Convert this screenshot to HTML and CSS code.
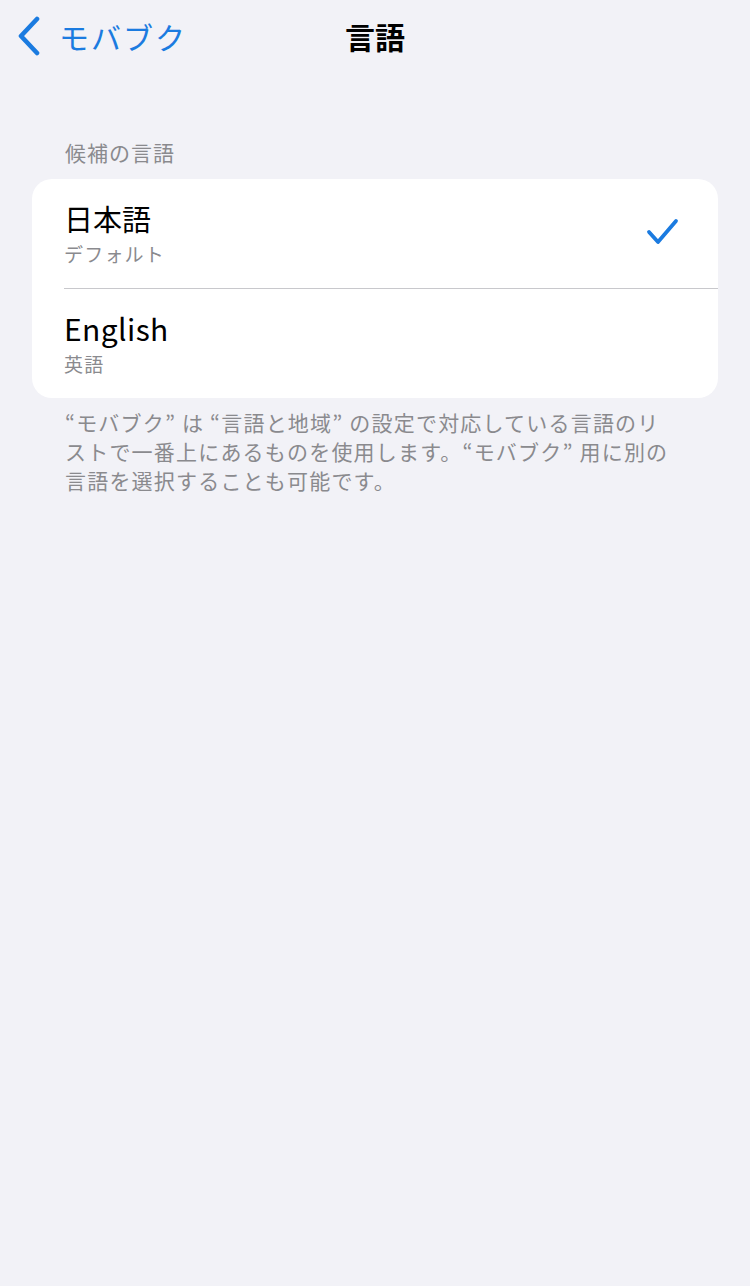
FILE: index.html
```html
<!DOCTYPE html>
<html>
<head>
    <title>言語</title>
    <link rel="stylesheet" href="styles.css">
</head>
<body>
    <div class="nav_bar">
        <div class="back_btn">
            <svg class="chevron" width="26" height="40" viewBox="0 0 26 40">
                <polyline points="22,3 6,20 22,37" fill="none" stroke="#1b7be0" stroke-width="4.6" stroke-linecap="round" stroke-linejoin="round"/>
            </svg>
            <span class="back_label">モバブク</span>
        </div>
        <div class="nav_title">言語</div>
    </div>

    <div class="section_header">候補の言語</div>

    <div class="group">
        <div class="row">
            <div class="row_text">
                <div class="row_title">日本語</div>
                <div class="row_sub">デフォルト</div>
            </div>
            <svg class="check" width="34" height="30" viewBox="0 0 34 30">
                <polyline points="3,15 12,25 30,4" fill="none" stroke="#1b7be0" stroke-width="3.8" stroke-linecap="round" stroke-linejoin="round"/>
            </svg>
        </div>
        <div class="row">
            <div class="row_text">
                <div class="row_title en">English</div>
                <div class="row_sub">英語</div>
            </div>
        </div>
    </div>

    <p class="section_footer">
        “モバブク” は “言語と地域” の設定で対応している言語のリ<br>
        ストで一番上にあるものを使用します。“モバブク” 用に別の<br>
        言語を選択することも可能です。
    </p>
</body>
</html>
```

FILE: styles.css
```css
/* Page */
body {
    margin: 0;
    background-color: #f2f2f7;
    font-family: "Noto Sans CJK JP", "Noto Sans", sans-serif;
    color: #000;
}

/* Navigation bar */
.nav_bar {
    position: relative;
    height: 72px;
    display: flex;
    align-items: center;
}

.back_btn {
    display: flex;
    align-items: center;
    gap: 18px;
    padding-left: 15px;
    color: #1b7be0;
}

.back_label {
    font-size: 30px;
    letter-spacing: 2px;
}

.nav_title {
    position: absolute;
    left: 0;
    right: 0;
    text-align: center;
    font-size: 30px;
    font-weight: bold;
    pointer-events: none;
}

/* Section header */
.section_header {
    margin: 64px 0 0 65px;
    font-size: 21px;
    line-height: 32px;
    letter-spacing: 1px;
    color: #8a8a8e;
}

/* Grouped list */
.group {
    margin: 11px 32px 0 32px;
    background-color: #fff;
    border-radius: 20px;
    overflow: hidden;
}

.row {
    display: flex;
    align-items: center;
    justify-content: space-between;
    height: 109px;
    margin-left: 32px;
    padding-right: 38px;
}

.row + .row {
    border-top: 1px solid #c8c8cc;
}

.row_title {
    font-size: 29px;
    line-height: 36px;
    margin-bottom: 4px;
}

.row_title.en {
    font-size: 30px;
    letter-spacing: 0.4px;
}

.row_sub {
    font-size: 19px;
    line-height: 28px;
    letter-spacing: 1.2px;
    color: #8a8a8e;
}

.check {
    margin-top: -3px;
}

/* Section footer */
.section_footer {
    margin: 10px 20px 0 65px;
    font-size: 21px;
    line-height: 29px;
    letter-spacing: 1.2px;
    color: #8a8a8e;
    white-space: nowrap;
}
```
